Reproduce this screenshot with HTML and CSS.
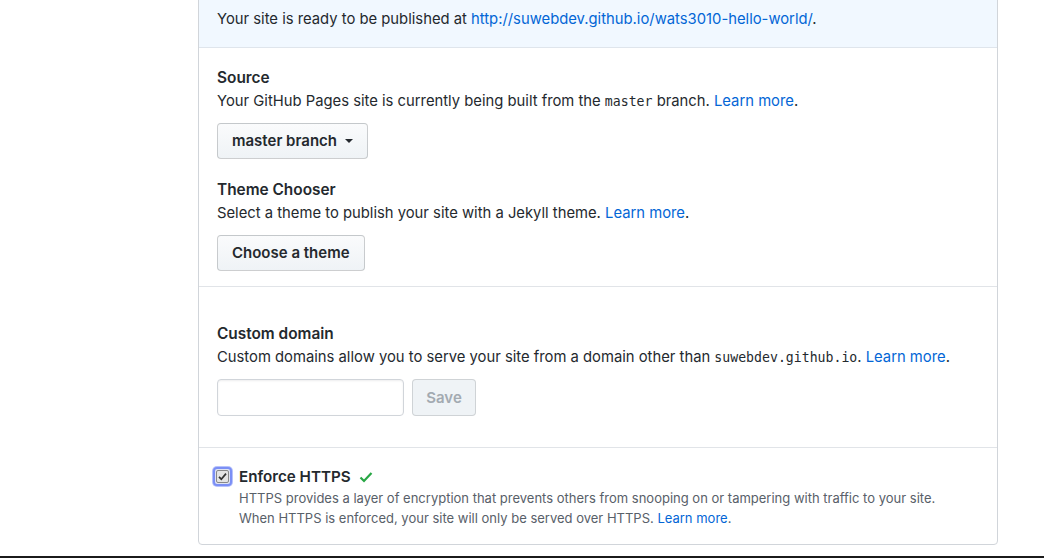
FILE: index.html
```html
<!DOCTYPE html>
<html>
<head>
<meta charset="utf-8">
<link rel="stylesheet" href="styles.css">
</head>
<body>
<div class="page">
  <div class="panel">
    <div class="flash">Your site is ready to be published at <a href="#">http://suwebdev.github.io/wats3010-hello-world/</a>.</div>
    <div class="section s1">
      <h3 class="heading">Source</h3>
      <p class="note">Your GitHub Pages site is currently being built from the <code>master</code> branch. <a href="#">Learn more</a>.</p>
      <button class="btn">master branch <span class="caret"></span></button>
      <h3 class="heading h-gap">Theme Chooser</h3>
      <p class="note">Select a theme to publish your site with a Jekyll theme. <a href="#">Learn more</a>.</p>
      <button class="btn">Choose a theme</button>
    </div>
    <div class="section s2">
      <h3 class="heading">Custom domain</h3>
      <p class="note">Custom domains allow you to serve your site from a domain other than <code>suwebdev.github.io</code>. <a href="#">Learn more</a>.</p>
      <div class="domain-row">
        <input class="field" type="text">
        <button class="btn btn-disabled">Save</button>
      </div>
    </div>
    <div class="section s3">
      <div class="check-row">
        <span class="checkbox"><svg width="11" height="11" viewBox="0 0 11 11"><path d="M2 5.8 L4.3 8.2 L9 2.6" fill="none" stroke="#333" stroke-width="1.7"/></svg></span>
        <div class="check-body">
          <div class="check-title">Enforce HTTPS <svg class="ok" width="14" height="12" viewBox="0 0 14 12"><path d="M1.5 6.5 L5 10 L12.5 2" fill="none" stroke="#28a745" stroke-width="2.2"/></svg></div>
          <p class="check-note">HTTPS provides a layer of encryption that prevents others from snooping on or tampering with traffic to your site.<br>When HTTPS is enforced, your site will only be served over HTTPS. <a href="#">Learn more</a>.</p>
        </div>
      </div>
    </div>
  </div>
  <div class="edge"></div>
</div>
</body>
</html>
```

FILE: styles.css
```css
* { box-sizing: border-box; }
html, body { margin: 0; padding: 0; background: #fff; }
body {
  font-family: Inter, "Liberation Sans", sans-serif;
  font-size: 14.8px;
  line-height: 23px;
  color: #24292e;
  overflow: hidden;
  height: 558px;
}
a { color: #0366d6; text-decoration: none; }
code {
  font-family: "DejaVu Sans Mono", monospace;
  font-size: 13.2px;
}
.page { display: flex; flex-direction: column; }
.panel {
  margin: -12px 0 0 198px;
  width: 800px;
  border: 1px solid #d1d5da;
  border-radius: 0 0 4px 4px;
}
.flash {
  background: #f1f8ff;
  border-bottom: 1px solid #dfe5ec;
  padding: 19px 18px 16px;
}
.section { padding: 0 18px; }
.section + .section { border-top: 1px solid #e1e4e8; }
.s1 { padding-top: 18px; padding-bottom: 15px; }
.s2 { padding-top: 35px; padding-bottom: 31px; }
.s3 { padding-top: 17px; padding-bottom: 16px; }
.heading { margin: 0; font-size: 15.4px; font-weight: 600; line-height: 23px; }
.h-gap { margin-top: 19px; }
.note { margin: 1px 0 10px; }
.btn {
  font-family: inherit;
  font-size: 15px;
  font-weight: 600;
  line-height: 22px;
  height: 36px;
  padding: 6px 14px;
  color: #24292e;
  background: linear-gradient(#fafbfc, #eff3f6);
  border: 1px solid rgba(27,31,35,0.2);
  border-radius: 4px;
  display: inline-flex;
  align-items: center;
}
.caret {
  display: inline-block;
  width: 0; height: 0;
  margin-left: 8px;
  border-top: 4px solid #24292e;
  border-left: 4px solid transparent;
  border-right: 4px solid transparent;
}
.domain-row { display: flex; gap: 8px; }
.field {
  width: 187px;
  height: 37px;
  border: 1px solid #d1d5da;
  border-radius: 4px;
  box-shadow: inset 0 1px 2px rgba(27,31,35,0.075);
  background: #fff;
}
.btn-disabled {
  height: 37px;
  width: 64px;
  justify-content: center;
  color: #a3aab1;
  background: #eff3f6;
  border-color: rgba(27,31,35,0.15);
}
.check-row { display: flex; align-items: flex-start; }
.checkbox {
  flex: none;
  width: 19px; height: 19px;
  margin: 2px 7px 0 -4px;
  border: 2px solid #7b8ff5;
  border-radius: 4px;
  background: #dfe3f0;
  display: flex; align-items: center; justify-content: center;
  box-shadow: 0 0 0 1px #b7c2fb;
}
.checkbox svg { background: #e4e4e4; border: 1px solid #888; border-radius: 2px; width: 13px; height: 13px; }
.check-title { font-weight: 600; font-size: 15.2px; display: flex; align-items: center; gap: 8px; }
.ok { margin-top: 1px; }
.check-note {
  margin: 0;
  font-size: 13px;
  line-height: 20px;
  color: #586069;
}
.edge { height: 2px; background: #1b1b1b; margin-top: 11px; }
```
